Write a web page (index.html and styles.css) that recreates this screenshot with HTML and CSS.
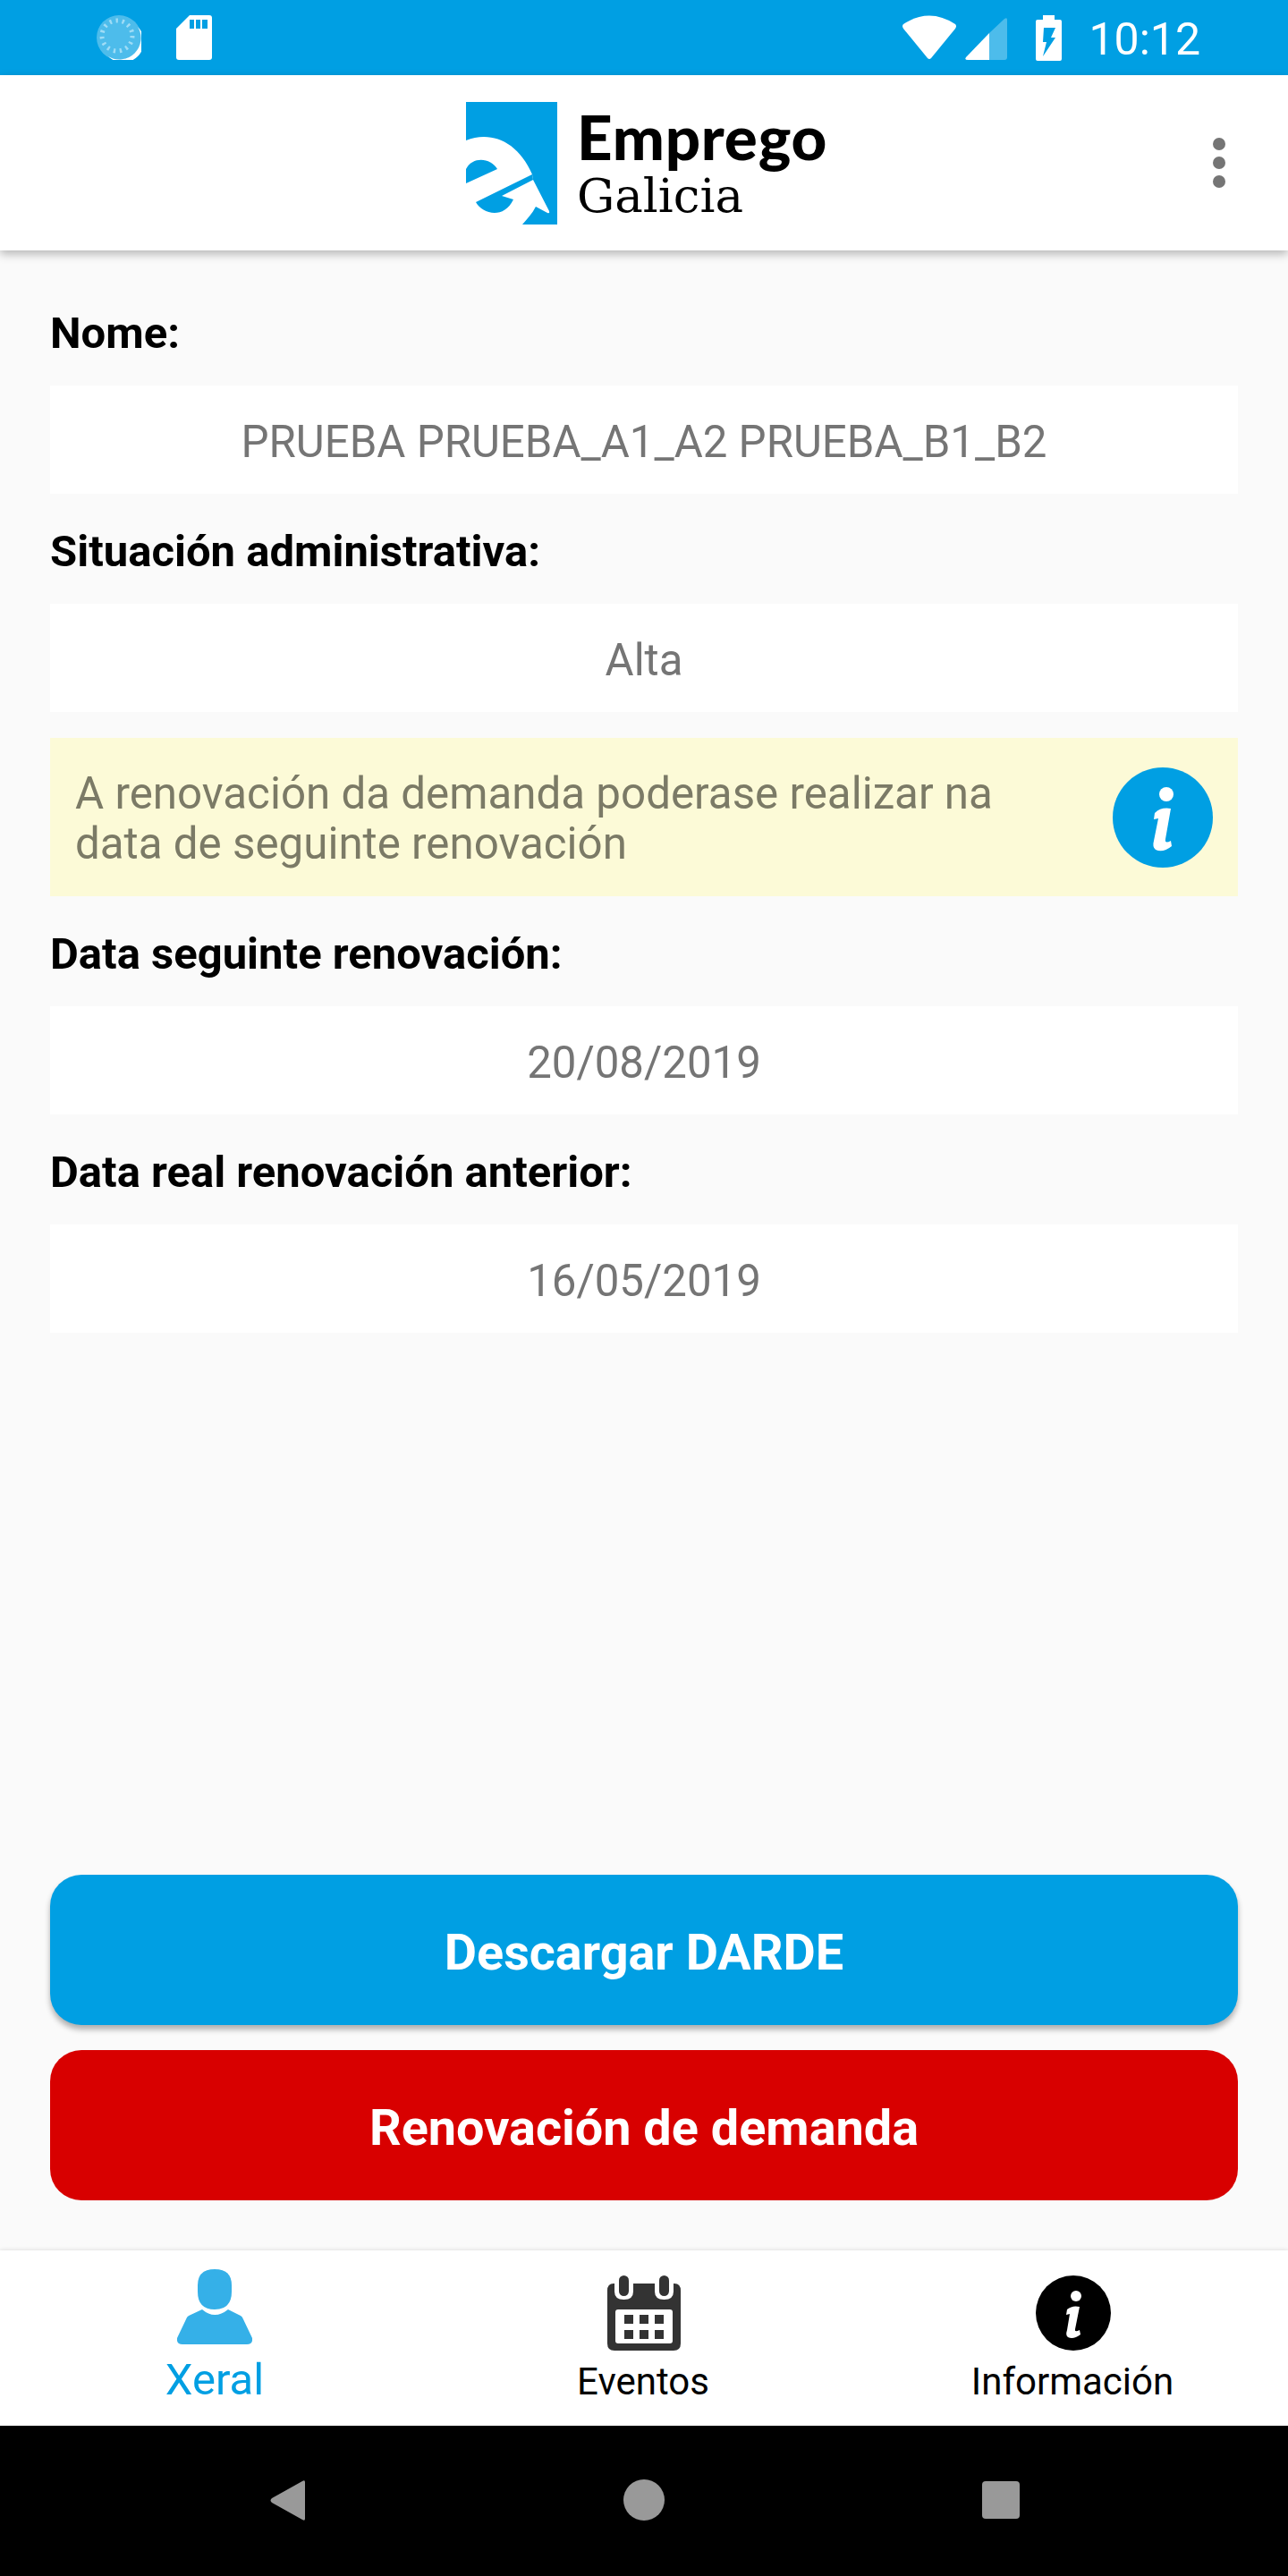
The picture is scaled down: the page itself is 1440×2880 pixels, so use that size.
FILE: index.html
```html
<!DOCTYPE html>
<html lang="gl">
<head>
<meta charset="UTF-8" />
<meta name="viewport" content="width=device-width, initial-scale=1" />
<title>Emprego Galicia</title>
<link rel="stylesheet" href="styles.css">
</head>
<body>
  <div class="screen">
    <div class="status-bar">
      <div class="status-left">
        <svg class="ic-sync" viewBox="0 0 50 50">
          <ellipse cx="25" cy="25" rx="25" ry="25" fill="#fff" opacity="0.3"/>
          <path d="M46 13 A23 23 0 0 1 13 46 A24 24 0 0 0 46 13Z" fill="#fff"/>
          <circle cx="23" cy="23" r="17" fill="none" stroke="#9fdcf6" stroke-width="5" stroke-dasharray="2.4 4.7"/>
        </svg>
        <svg class="ic-sd" viewBox="0 0 40 50">
          <path d="M15 0H37Q40 0 40 3V47Q40 50 37 50H3Q0 50 0 47V15Z" fill="#fff"/>
          <path d="M15 5h5v10h-5zM22 5h5v10h-5zM29 5h6v10h-6z" fill="#009fe3"/>
        </svg>
      </div>
      <div class="status-right">
        <svg class="ic-wifi" viewBox="0 0 60 50">
          <path d="M1 10Q30 -9 59 10Q61 12 59 15L32 48Q30 50 28 48L1 15Q-1 12 1 10Z" fill="#fff"/>
        </svg>
        <svg class="ic-signal" viewBox="0 0 47 47">
          <path d="M27 17L44 1Q47 -1 47 2V44Q47 47 44 47H27Z" fill="#fff" opacity="0.3"/>
          <path d="M27 17V47H3Q-1 47 1 44Z" fill="#fff"/>
        </svg>
        <svg class="ic-battery" viewBox="0 0 29 51">
          <path d="M8 0H21V5H27Q29 5 29 7V49Q29 51 27 51H2Q0 51 0 49V7Q0 5 2 5H8Z" fill="#fff"/>
          <path d="M9 14H22L17 25H22L8 46L12 30H8Z" fill="#009fe3"/>
        </svg>
        <span class="clock">10:12</span>
      </div>
    </div>

    <header class="app-bar">
      <div class="logo">
        <svg class="logo-mark" viewBox="0 0 102 137">
          <rect width="102" height="137" fill="#009fe3"/>
          <path d="M0 43C28 32 58 44 74 81L75 87L93 122Q94 125 91 124L78 117C74 125 68 131 63 137H0Z" fill="#fff"/>
          <path d="M0 91L35 75C28 63 8 60 0 75Z" fill="#009fe3"/>
          <path d="M74 81L11 112C18 125 42 132 53 109L40 105L75 87Z" fill="#009fe3"/>
        </svg>
        <div class="logo-text">
          <span class="logo-top">Emprego</span>
          <span class="logo-bottom">Galicia</span>
        </div>
      </div>
      <div class="menu-dots"><i></i><i></i><i></i></div>
    </header>

    <main class="content">
      <div class="label first">Nome:</div>
      <div class="value">PRUEBA PRUEBA_A1_A2 PRUEBA_B1_B2</div>

      <div class="label">Situación administrativa:</div>
      <div class="value">Alta</div>

      <div class="notice">
        <p>A renovación da demanda poderase realizar na data de seguinte renovación</p>
        <svg class="notice-icon" viewBox="0 0 112 112">
          <circle cx="56" cy="56" r="56" fill="#009fe3"/>
          <circle cx="60" cy="30" r="8" fill="#fff"/>
          <path d="M47 51Q54 44 65 46L59 80Q58 86 65 82L66 88Q56 96 48 92Q44 89 46 82L51 57L46 58Z" fill="#fff"/>
        </svg>
      </div>

      <div class="label">Data seguinte renovación:</div>
      <div class="value">20/08/2019</div>

      <div class="label">Data real renovación anterior:</div>
      <div class="value">16/05/2019</div>

      <div class="actions">
        <button class="btn btn-blue">Descargar DARDE</button>
        <button class="btn btn-red">Renovación de demanda</button>
      </div>
    </main>

    <nav class="tabs">
      <div class="tab active">
        <svg class="tab-icon ic-person" viewBox="0 0 84 84">
          <path d="M23 18Q23 0 42 0Q61 0 61 18V25Q61 45 42 45Q23 45 23 25Z" fill="#35b0e8"/>
          <path d="M28 45Q42 57 57 45L71 52Q73 53 74 56L84 77Q85 84 78 84H6Q-1 84 0 77L10 56Q11 53 13 52Z" fill="#35b0e8"/>
        </svg>
        <span>Xeral</span>
      </div>
      <div class="tab">
        <svg class="tab-icon ic-cal" viewBox="0 0 82 84">
          <path d="M0 17Q0 9 7 9H8V18Q8 27 18.500 27Q29 27 29 18V9H53V18Q53 27 63.500 27Q74 27 74 18V9H75Q82 9 82 17V76Q82 84 74 84H8Q0 84 0 76Z" fill="#333"/>
          <rect x="13" y="0" width="11" height="23" rx="5.500" fill="#333"/>
          <rect x="58" y="0" width="11" height="23" rx="5.500" fill="#333"/>
          <rect x="9" y="38" width="64" height="38" rx="3" fill="#fff"/>
          <path d="M19 44h10v10h-10zM36 44h10v10h-10zM53 44h10v10h-10zM19 61h10v10h-10zM36 61h10v10h-10zM53 61h10v10h-10z" fill="#333"/>
        </svg>
        <span>Eventos</span>
      </div>
      <div class="tab">
        <svg class="tab-icon ic-info" viewBox="0 0 84 84">
          <circle cx="42" cy="42" r="42" fill="#000"/>
          <circle cx="45" cy="23" r="6" fill="#fff"/>
          <path d="M35 38Q41 33 49 35L44 60Q43 64 49 61L50 66Q42 72 36 69Q33 67 35 61L38 43L34 44Z" fill="#fff"/>
        </svg>
        <span>Información</span>
      </div>
    </nav>

    <div class="system-nav">
      <svg class="sys-back" viewBox="0 0 39 45">
        <path d="M39 2V43Q39 46 36 44L2 25Q-1 22.500 2 20L36 1Q39 -1 39 2Z" fill="#999"/>
      </svg>
      <div class="sys-home"></div>
      <div class="sys-recent"></div>
    </div>
  </div>
</body>
</html>
```

FILE: styles.css
```css
:root {
  --blue: #009fe3;
  --red: #d80000;
  --page-bg: #fafafa;
  --text-muted: #757575;
}

html, body {
  margin: 0;
  padding: 0;
  font-family: Roboto, "Liberation Sans", sans-serif;
  background: var(--page-bg);
}

.screen {
  width: 1440px;
  height: 2880px;
  display: flex;
  flex-direction: column;
  overflow: hidden;
}

/* android status bar */
.status-bar {
  height: 84px;
  flex: none;
  background: var(--blue);
  display: flex;
  justify-content: space-between;
  align-items: center;
  padding: 0 98px 0 108px;
  box-sizing: border-box;
  color: #fff;
}

.status-left,
.status-right {
  display: flex;
  align-items: center;
}

.ic-sync { width: 50px; height: 50px; margin-right: 39px; }
.ic-sd { width: 40px; height: 50px; }
.ic-wifi { width: 60px; height: 50px; margin-right: 10px; }
.ic-signal { width: 47px; height: 47px; margin: 3px 32px 0 0; }
.ic-battery { width: 29px; height: 51px; margin-right: 30px; }

.clock {
  font-size: 50px;
  line-height: 88px;
  height: 84px;
}

/* app bar */
.app-bar {
  height: 196px;
  flex: none;
  background: #fff;
  display: flex;
  align-items: center;
  justify-content: center;
  position: relative;
  z-index: 2;
  box-shadow: 0 4px 10px rgba(0, 0, 0, 0.28);
}

.logo {
  display: flex;
  align-items: center;
  gap: 22px;
  margin-left: 6px;
}

.logo-mark {
  width: 102px;
  height: 137px;
}

.logo-text {
  display: flex;
  flex-direction: column;
  color: #000;
  margin-top: 4px;
}

.logo-top {
  font-family: Lato, sans-serif;
  font-size: 69px;
  font-weight: 900;
  line-height: 66px;
  letter-spacing: 0.8px;
}

.logo-bottom {
  font-family: "DejaVu Serif", serif;
  font-size: 53px;
  font-weight: 400;
  line-height: 58px;
  margin-top: 4px;
}

.menu-dots {
  position: absolute;
  right: 70px;
  top: 70px;
  display: flex;
  flex-direction: column;
  gap: 7px;
}

.menu-dots i {
  width: 14px;
  height: 14px;
  border-radius: 50%;
  background: #757575;
}

/* main form */
.content {
  flex: 1;
  display: flex;
  flex-direction: column;
  padding: 28px 56px 56px;
  box-sizing: border-box;
}

.label {
  font-size: 49px;
  font-weight: 700;
  line-height: 60px;
  height: 58px;
  color: #000;
  margin: 35px 0 30px;
}

.value {
  background: #fff;
  height: 121px;
  flex: none;
  line-height: 127px;
  font-size: 49.2px;
  text-align: center;
  color: var(--text-muted);
}

.notice {
  margin-top: 29px;
  height: 177px;
  flex: none;
  background: #fcfad7;
  display: flex;
  align-items: center;
  justify-content: space-between;
  padding: 0 28px;
  box-sizing: border-box;
}

.notice p {
  margin: 3px 0 0;
  font-size: 49.3px;
  line-height: 56px;
  color: #7b7a66;
  width: 1060px;
}

.notice-icon {
  width: 112px;
  height: 112px;
  flex: none;
}

.actions {
  margin-top: auto;
  display: flex;
  flex-direction: column;
  gap: 28px;
}

.btn {
  height: 168px;
  border: none;
  border-radius: 35px;
  color: #fff;
  font-family: inherit;
  font-size: 55.8px;
  font-weight: 700;
  padding: 6px 0 0;
}

.btn-blue {
  background: var(--blue);
  box-shadow: 0 5px 6px rgba(0, 0, 0, 0.3);
}

.btn-red {
  background: var(--red);
}

/* bottom tabs */
.tabs {
  height: 196px;
  flex: none;
  background: #fff;
  display: grid;
  grid-template-columns: repeat(3, 1fr);
  box-shadow: 0 -1px 4px rgba(0, 0, 0, 0.1);
  position: relative;
}

.tab {
  display: flex;
  flex-direction: column;
  align-items: center;
  font-size: 42px;
  color: #000;
  padding-top: 28px;
}

.tab span {
  line-height: 50px;
  margin-top: 10px;
  margin-right: 2px;
}

.tab-icon {
  width: 84px;
  height: 84px;
}

.tab.active {
  color: var(--blue);
  font-size: 49px;
  padding-top: 21px;
}

.tab.active span {
  line-height: 56px;
  margin-top: 12px;
  margin-right: 0;
}

/* android nav buttons */
.system-nav {
  height: 168px;
  flex: none;
  background: #000;
  display: grid;
  grid-template-columns: repeat(3, 399px);
  justify-content: center;
  align-items: center;
  justify-items: center;
}

.sys-back { width: 39px; height: 45px; margin-top: -2px; }

.sys-home {
  width: 46px;
  height: 46px;
  border-radius: 50%;
  background: #999;
  margin-top: -2px;
}

.sys-recent {
  width: 42px;
  height: 42px;
  border-radius: 4px;
  background: #999;
  margin-top: -2px;
}
```
